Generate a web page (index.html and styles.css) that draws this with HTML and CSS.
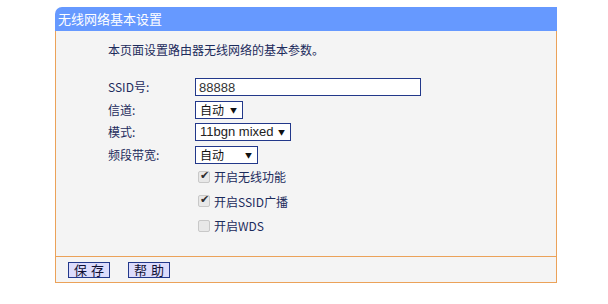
FILE: index.html
```html
<!DOCTYPE html>
<html lang="zh-CN">
<head>
    <title>无线网络基本设置</title>
    <meta charset="UTF-8">
    <link rel="stylesheet" href="styles.css">
</head>
<body>
    <div class="panel">
        <div class="panel-title">无线网络基本设置</div>
        <div class="panel-body">
            <p class="intro">本页面设置路由器无线网络的基本参数。</p>
            <form class="settings">
                <label class="field-label" for="ssid">SSID号:</label>
                <div><input id="ssid" class="text-input" type="text" value="88888"></div>

                <label class="field-label" for="channel">信道:</label>
                <div class="select-wrap w-channel">
                    <select id="channel" class="select"><option>自动</option></select>
                    <span class="arrow">▼</span>
                </div>

                <label class="field-label" for="mode">模式:</label>
                <div class="select-wrap w-mode">
                    <select id="mode" class="select latin"><option>11bgn mixed</option></select>
                    <span class="arrow">▼</span>
                </div>

                <label class="field-label" for="width">频段带宽:</label>
                <div class="select-wrap w-band">
                    <select id="width" class="select"><option>自动</option></select>
                    <span class="arrow">▼</span>
                </div>
            </form>
            <ul class="checks">
                <li><label><input type="checkbox" class="check" checked> 开启无线功能</label></li>
                <li><label><input type="checkbox" class="check" checked> 开启SSID广播</label></li>
                <li><label><input type="checkbox" class="check"> 开启WDS</label></li>
            </ul>
        </div>
        <div class="panel-foot">
            <button class="btn" type="button">保存</button>
            <button class="btn" type="button">帮助</button>
        </div>
    </div>
</body>
</html>
```

FILE: styles.css
```css
* {
    box-sizing: border-box;
}

body {
    margin: 0;
    background: #ffffff;
    font-family: "Noto Sans CJK SC", "DejaVu Sans", sans-serif;
    font-size: 12px;
    color: #1c2b5c;
}

.panel {
    margin: 7px 0 0 55px;
    width: 502px;
}

.panel-title {
    height: 24px;
    line-height: 24px;
    padding-left: 3px;
    background: #6699ff;
    border-top-left-radius: 7px;
    color: #ffffff;
    font-size: 13px;
}

.panel-body {
    height: 226px;
    background: #f4f4f4;
    border-left: 1px solid #eba259;
    border-right: 1px solid #eba259;
    border-bottom: 1px solid #eba259;
    padding: 11px 0 0 52px;
}

.intro {
    margin: 0;
    line-height: 16px;
}

.settings {
    display: grid;
    grid-template-columns: 87px auto;
    grid-auto-rows: 18px;
    row-gap: 4.5px;
    margin-top: 20px;
    align-items: center;
}

.field-label {
    line-height: 18px;
}

.text-input {
    display: block;
    width: 226px;
    height: 18px;
    border: 1px solid #22388a;
    background: #ffffff;
    padding: 0 3px;
    font-family: "Liberation Sans", Arial, sans-serif;
    font-size: 13px;
    color: #333333;
    outline: none;
}

.select-wrap {
    position: relative;
    height: 18px;
}

.w-channel { width: 48px; }
.w-mode { width: 96px; }
.w-band { width: 63px; }

.select {
    -webkit-appearance: none;
    appearance: none;
    display: block;
    width: 100%;
    height: 18px;
    border: 1px solid #22388a;
    border-radius: 0;
    background: #ffffff;
    padding: 0 0 0 4px;
    font-family: "Noto Sans CJK SC", sans-serif;
    font-size: 12px;
    color: #111111;
    line-height: 16px;
}

.select.latin {
    font-family: "Liberation Sans", Arial, sans-serif;
    font-size: 13px;
    color: #222222;
}

.arrow {
    position: absolute;
    right: 6px;
    top: 4px;
    font-size: 7px;
    line-height: 10px;
    color: #111111;
    pointer-events: none;
}

.checks {
    list-style: none;
    margin: 1px 0 0 90px;
    padding: 0;
}

.checks li {
    height: 24.5px;
    display: flex;
    align-items: center;
}

.checks label {
    display: flex;
    align-items: center;
    gap: 4px;
}

.check {
    -webkit-appearance: none;
    appearance: none;
    position: relative;
    width: 12px;
    height: 12px;
    margin: 0;
    border: 1px solid #c8c8c8;
    border-radius: 2px;
    background: #e8e8e8;
}

.check:checked::after {
    content: "✔";
    position: absolute;
    left: 1px;
    top: -3px;
    font-size: 11px;
    color: #2e2e2e;
}

.panel-foot {
    height: 26px;
    background: #f4f4f4;
    border-left: 1px solid #eba259;
    border-right: 1px solid #eba259;
    border-bottom: 1px solid #eba259;
    padding: 5px 0 0 12px;
    display: flex;
    gap: 18px;
}

.btn {
    height: 16px;
    width: 42px;
    padding: 0 0 0 4px;
    border: 1px solid #22388a;
    background: #dcdcfc;
    font-family: "Noto Sans CJK SC", sans-serif;
    font-size: 13px;
    line-height: 14px;
    letter-spacing: 4px;
    color: #111133;
}
```
